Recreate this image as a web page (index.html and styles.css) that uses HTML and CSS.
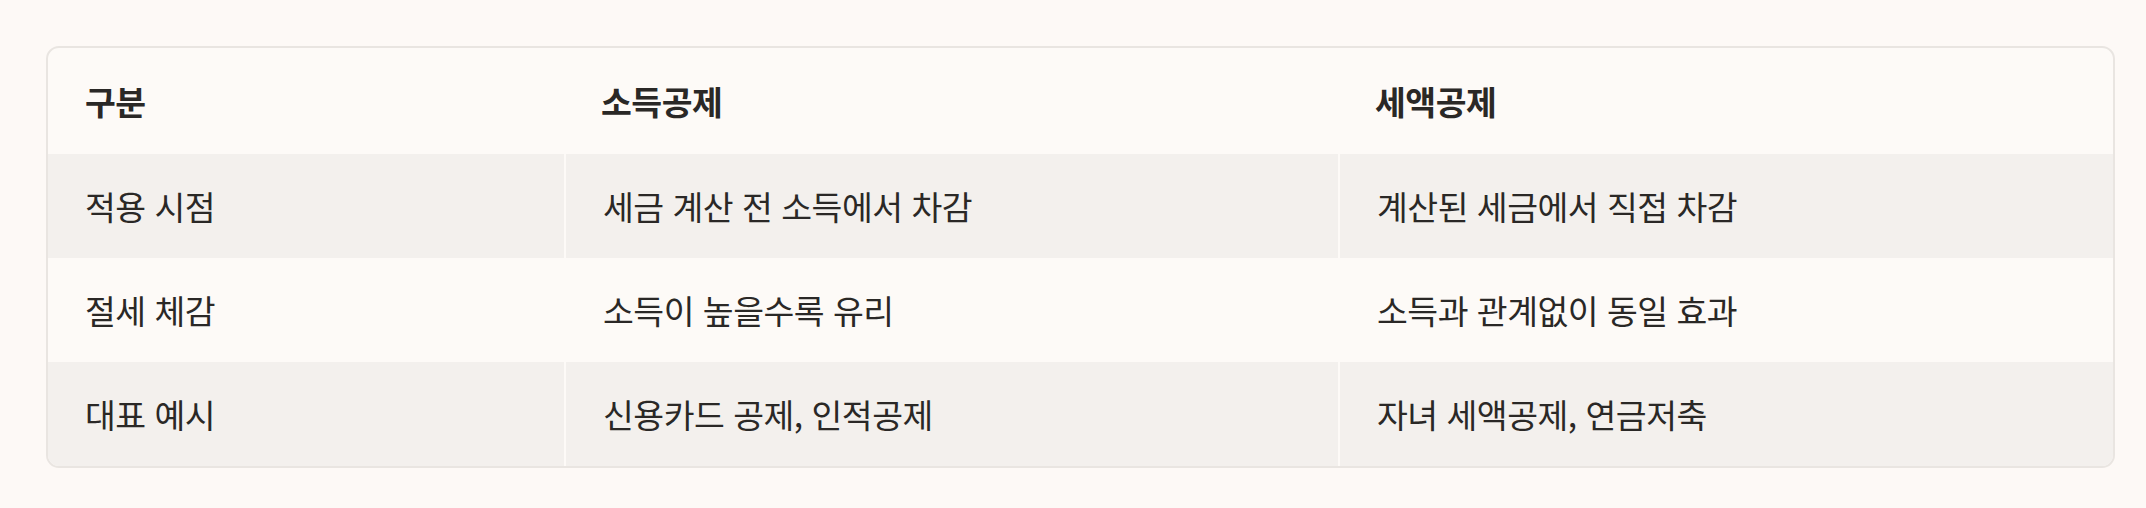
FILE: index.html
```html
<!DOCTYPE html>
<html lang="ko">
<head>
<meta charset="utf-8">
<link rel="stylesheet" href="styles.css">
</head>
<body>
<div class="wrap">
  <table class="cmp">
    <colgroup>
      <col class="c1"><col class="c2"><col class="c3">
    </colgroup>
    <thead>
      <tr><th>구분</th><th>소득공제</th><th>세액공제</th></tr>
    </thead>
    <tbody>
      <tr class="alt"><td>적용 시점</td><td>세금 계산 전 소득에서 차감</td><td>계산된 세금에서 직접 차감</td></tr>
      <tr><td>절세 체감</td><td>소득이 높을수록 유리</td><td>소득과 관계없이 동일 효과</td></tr>
      <tr class="alt"><td>대표 예시</td><td>신용카드 공제, 인적공제</td><td>자녀 세액공제, 연금저축</td></tr>
    </tbody>
  </table>
</div>
</body>
</html>
```
FILE: styles.css
```css
html, body { margin: 0; padding: 0; }
body {
  background: #fdf9f6;
  font-family: "Noto Sans CJK KR", "Noto Sans", sans-serif;
  color: #2a2826;
}
.wrap {
  padding: 46px 31px 0 46px;
}
.cmp {
  width: 2069px;
  border-collapse: separate;
  border-spacing: 0;
  border: 2px solid #e9e5e1;
  border-radius: 13px;
  overflow: hidden;
  background: #fdfaf7;
  table-layout: fixed;
}
.c1 { width: 516px; }
.c2 { width: 774px; }
.cmp th, .cmp td {
  text-align: left;
  padding: 0 0 0 37px;
  vertical-align: middle;
  font-size: 33.5px;
  letter-spacing: -0.5px;
  line-height: 1.3;
}
.cmp th {
  height: 106px;
  font-weight: 700;
}
.cmp td {
  height: 104px;
  font-weight: 400;
  border-left: 2px solid #fdfaf7;
}
.cmp td:first-child { border-left: 0; }
.cmp tr.alt td { background: #f3f0ed; }
```
